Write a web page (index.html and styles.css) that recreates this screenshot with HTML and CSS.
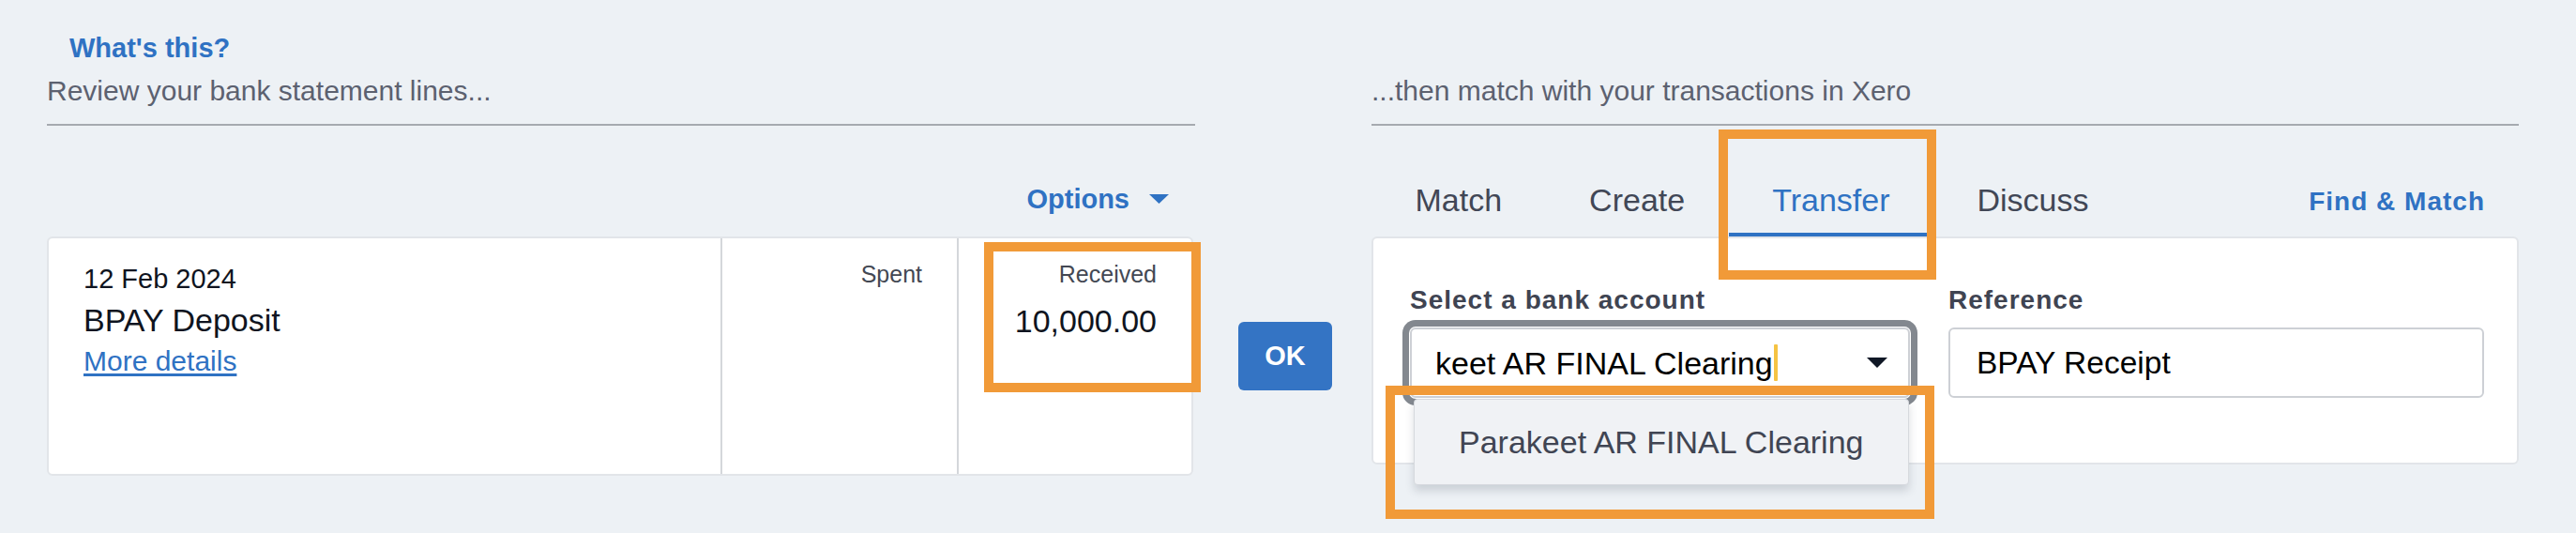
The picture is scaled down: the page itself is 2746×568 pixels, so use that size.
FILE: index.html
```html
<!DOCTYPE html>
<html lang="en">
<head>
<meta charset="utf-8">
<title>Reconcile</title>
<link rel="stylesheet" href="styles.css">
</head>
<body>
<div class="page">
  <div class="col-head head-left">
    <a class="whats-this">What's this?</a>
    <div class="head-text">Review your bank statement lines...</div>
  </div>
  <div class="col-head head-right">
    <div class="head-text">...then match with your transactions in Xero</div>
  </div>

  <div class="toolbar-left">
    <div class="options">
      <span>Options</span>
      <svg class="options-caret" width="21" height="10" viewBox="0 0 21 10"><path d="M0 0H21L10.5 10Z" fill="#2f72c3"/></svg>
    </div>
  </div>
  <div class="toolbar-right">
    <div class="tab">Match</div>
    <div class="tab">Create</div>
    <div class="tab active">Transfer<span class="highlight hl-tab"></span></div>
    <div class="tab">Discuss</div>
    <a class="find-match">Find &amp; Match</a>
  </div>

  <div class="statement-card">
    <div class="cell cell-details">
      <div class="date">12 Feb 2024</div>
      <div class="payee">BPAY Deposit</div>
      <a class="more">More details</a>
    </div>
    <div class="cell cell-amount">
      <div class="amt-label">Spent</div>
    </div>
    <div class="cell cell-amount">
      <div class="amt-label">Received</div>
      <div class="amount">10,000.00</div>
      <span class="highlight hl-received"></span>
    </div>
  </div>

  <button class="ok-btn">OK</button>

  <div class="transfer-panel">
    <div class="field field-account">
      <div class="field-label">Select a bank account</div>
      <div class="select">
        <div class="select-value">keet AR FINAL Clearing</div>
        <span class="text-caret"></span>
        <svg class="select-arrow" width="22" height="11" viewBox="0 0 22 11"><path d="M0 0H22L11 11Z" fill="#101826"/></svg>
        <div class="dropdown">Parakeet AR FINAL Clearing</div>
        <span class="highlight hl-dropdown"></span>
      </div>
    </div>
    <div class="field field-ref">
      <div class="field-label">Reference</div>
      <div class="text-input">BPAY Receipt</div>
    </div>
  </div>
</div>
</body>
</html>
```

FILE: styles.css
```css
* { box-sizing: border-box; }
html, body { margin: 0; }
body {
  background: #edf1f5;
  font-family: "Liberation Sans", Arial, sans-serif;
  width: 2746px;
  height: 568px;
  overflow: hidden;
}
.page {
  display: grid;
  grid-template-columns: 1224px 188px 1223px;
  grid-template-rows: 100px 118px auto;
  grid-template-areas:
    "lhead . rhead"
    "ltool . rtool"
    "lcard ok rcard";
  padding: 34px 0 0 50px;
}

/* headers */
.col-head {
  display: flex;
  flex-direction: column;
  justify-content: flex-end;
  border-bottom: 2px solid #a6aab0;
  padding-bottom: 17px;
}
.head-left { grid-area: lhead; }
.head-right { grid-area: rhead; }
.whats-this {
  font-weight: 700;
  font-size: 29px;
  line-height: 34px;
  color: #2f72c3;
  padding-left: 24px;
  margin-bottom: 11px;
}
.head-text {
  font-size: 30px;
  line-height: 36px;
  color: #5c6170;
}

/* toolbars */
.toolbar-left {
  grid-area: ltool;
  display: flex;
  justify-content: flex-end;
  align-items: flex-start;
  padding: 61px 28px 0 0;
}
.options {
  display: flex;
  align-items: center;
  height: 34px;
  font-weight: 700;
  font-size: 29px;
  line-height: 34px;
  color: #2f72c3;
}
.options-caret { margin-left: 21px; }

.toolbar-right {
  grid-area: rtool;
  display: flex;
  align-items: flex-end;
}
.tab {
  position: relative;
  font-size: 34px;
  line-height: 40px;
  padding: 0 46.5px 15px;
  border-bottom: 4px solid transparent;
  color: #414756;
}
.tab.active {
  color: #2f72c3;
  border-bottom-color: #2f72c3;
}
.find-match {
  align-self: flex-start;
  margin: 64px 36px 0 auto;
  font-weight: 700;
  font-size: 28px;
  line-height: 34px;
  letter-spacing: 1px;
  color: #2f72c3;
}

/* annotation boxes */
.highlight {
  position: absolute;
  border: 10px solid #f19a38;
  pointer-events: none;
  z-index: 5;
}
.hl-tab { left: -11px; top: -55px; width: 232px; height: 160px; }
.hl-received { left: 27px; top: 4px; width: 231px; height: 160px; }
.hl-dropdown { left: -28px; top: 60px; width: 585px; height: 142px; }

/* statement card */
.statement-card {
  grid-area: lcard;
  align-self: start;
  height: 255px;
  width: 1222px;
  background: #fff;
  border: 2px solid #e2e5e9;
  border-radius: 6px;
  display: grid;
  grid-template-columns: 716px 252px 250px;
}
.cell { position: relative; padding-top: 26px; }
.cell-details { padding-left: 37px; }
.date {
  font-size: 29px;
  line-height: 34px;
  color: #0f1420;
}
.payee {
  margin-top: 7px;
  font-size: 34px;
  line-height: 40px;
  color: #0f1420;
}
.more {
  display: inline-block;
  margin-top: 6px;
  font-size: 30px;
  line-height: 36px;
  color: #2f72c3;
  text-decoration: underline;
  text-underline-offset: 3px;
}
.cell-amount {
  border-left: 2px solid #d4d7db;
  text-align: right;
  padding: 23px 37px 0 0;
}
.amt-label {
  font-size: 25px;
  line-height: 30px;
  color: #434853;
}
.amount {
  margin-top: 15px;
  font-size: 34px;
  line-height: 40px;
  color: #0f1420;
}

/* ok */
.ok-btn {
  grid-area: ok;
  align-self: center;
  justify-self: start;
  margin-left: 46px;
  width: 100px;
  height: 73px;
  border: none;
  border-radius: 6px;
  background: #3474c4;
  color: #fff;
  font-family: "Liberation Sans", Arial, sans-serif;
  font-weight: 700;
  font-size: 29px;
  padding: 0;
}

/* transfer panel */
.transfer-panel {
  grid-area: rcard;
  align-self: start;
  height: 243px;
  background: #fff;
  border: 2px solid #e2e5e9;
  border-radius: 6px;
  display: flex;
  gap: 41px;
  padding: 49px 35px 0 39px;
}
.field-account { width: 533px; flex: 0 0 533px; }
.field-ref { flex: 1; }
.field-label {
  font-weight: 700;
  font-size: 28px;
  line-height: 34px;
  letter-spacing: 1px;
  color: #3f4452;
  margin-bottom: 12px;
}
.select {
  position: relative;
  height: 75px;
  border: 2px solid #cdd0d5;
  border-radius: 6px;
  background: #fff;
  box-shadow: 0 0 0 1px #fff, 0 0 0 8px #83888f;
  display: flex;
  align-items: center;
  padding: 0 22px 0 25px;
}
.select-value {
  white-space: nowrap;
  font-size: 34px;
  line-height: 40px;
  color: #000;
}
.text-caret {
  width: 4px;
  height: 39px;
  margin-left: 1px;
  background: #f5c343;
  border-radius: 1px;
}
.select-arrow { margin-left: auto; }
.dropdown {
  position: absolute;
  left: 2px;
  top: 74px;
  width: 528px;
  height: 92px;
  background: #f0f2f5;
  border: 1px solid #d6d9de;
  border-radius: 4px;
  box-shadow: 0 6px 10px rgba(50, 60, 80, 0.18);
  padding-left: 47px;
  font-size: 34px;
  line-height: 90px;
  color: #404553;
  white-space: nowrap;
  z-index: 3;
}
.text-input {
  height: 75px;
  border: 2px solid #cdd0d5;
  border-radius: 6px;
  padding-left: 28px;
  font-size: 33.5px;
  line-height: 71px;
  color: #000;
}
```
